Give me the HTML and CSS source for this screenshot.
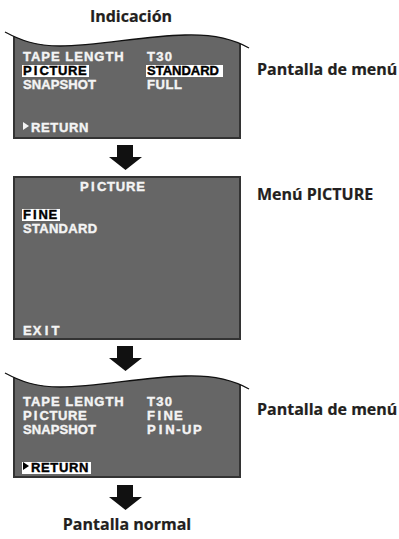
FILE: index.html
```html
<!DOCTYPE html>
<html lang="es">
<head>
    <meta charset="UTF-8">
    <meta name="viewport" content="width=device-width, initial-scale=1.0">
    <title>Indicación</title>
    <link rel="stylesheet" href="styles.css">
</head>
<body>

<div class="page">
    <h1 class="caption caption-top">Indicación</h1>

    <!-- menu screen -->
    <div class="step step-menu">
        <div class="screen wavy screen-menu">
            <svg class="wave" width="250" height="19" viewBox="0 0 250 19">
                <svg x="13" y="0" width="228" height="19" viewBox="13 0 228 19">
                    <path d="M5,2 C20,10 35,16 60,16 C100,16 140,6 185,5 C215,4 235,10 249,18 L249,19 L5,19 Z" fill="#333"/>
                </svg>
                <svg x="15" y="0" width="224" height="19" viewBox="15 0 224 19">
                    <path d="M5,2 C20,10 35,16 60,16 C100,16 140,6 185,5 C215,4 235,10 249,18 L249,19 L5,19 Z" fill="#666"/>
                </svg>
                <path d="M5,2 C20,10 35,16 60,16 C100,16 140,6 185,5 C215,4 235,10 249,18" fill="none" stroke="#111" stroke-width="1.3"/>
            </svg>
            <div class="rows">
                <span class="sp-tape">TAPE LENGTH</span><span class="sp-t30">T30</span>
                <span><span class="hl sp-pic">P<span class="wi">I</span>CTURE</span></span><span><span class="hl hl-std">STANDARD</span></span>
                <span class="sp-snap">SNAPSHOT</span><span class="sp-full">FULL</span>
            </div>
            <div class="return"><span class="tri"></span>RETURN</div>
        </div>
        <p class="label">Pantalla de menú</p>
    </div>

    <svg class="arrow" width="33" height="25" viewBox="0 0 33 25"><polygon points="8,0 24,0 24,12 33,12 16.5,25 0,12 8,12" fill="#111"/></svg>

    <!-- picture menu -->
    <div class="step step-picture">
        <div class="screen screen-picture">
            <div class="title">P<span class="wi">I</span>CTURE</div>
            <div class="opts">
                <div><span class="hl sp-fine">F<span class="wi">I</span>NE</span></div>
                <div class="sp-std">STANDARD</div>
            </div>
            <div class="exit">EX<span class="wi wi-exit">I</span>T</div>
        </div>
        <p class="label">Menú PICTURE</p>
    </div>

    <svg class="arrow" width="33" height="25" viewBox="0 0 33 25"><polygon points="8,0 24,0 24,12 33,12 16.5,25 0,12 8,12" fill="#111"/></svg>

    <!-- menu screen, updated -->
    <div class="step step-menu2">
        <div class="screen wavy screen-menu2">
            <svg class="wave" width="250" height="19" viewBox="0 0 250 19">
                <svg x="13" y="0" width="228" height="19" viewBox="13 0 228 19">
                    <path d="M5,2 C20,10 35,16 60,16 C100,16 140,6 185,5 C215,4 235,10 249,18 L249,19 L5,19 Z" fill="#333"/>
                </svg>
                <svg x="15" y="0" width="224" height="19" viewBox="15 0 224 19">
                    <path d="M5,2 C20,10 35,16 60,16 C100,16 140,6 185,5 C215,4 235,10 249,18 L249,19 L5,19 Z" fill="#666"/>
                </svg>
                <path d="M5,2 C20,10 35,16 60,16 C100,16 140,6 185,5 C215,4 235,10 249,18" fill="none" stroke="#111" stroke-width="1.3"/>
            </svg>
            <div class="rows">
                <span class="sp-tape">TAPE LENGTH</span><span class="sp-t30">T30</span>
                <span class="sp-pic">P<span class="wi">I</span>CTURE</span><span class="sp-fine2">F<span class="wi">I</span>NE</span>
                <span class="sp-snap">SNAPSHOT</span><span class="sp-pin">P<span class="wi">I</span>N-UP</span>
            </div>
            <div class="return"><span class="hl"><span class="tri"></span>RETURN</span></div>
        </div>
        <p class="label">Pantalla de menú</p>
    </div>

    <svg class="arrow arrow-last" width="33" height="25" viewBox="0 0 33 25"><polygon points="8,0 24,0 24,12 33,12 16.5,25 0,12 8,12" fill="#111"/></svg>

    <p class="caption caption-bottom">Pantalla normal</p>
</div>

</body>
</html>
```

FILE: styles.css
```css
* {
    box-sizing: border-box;
}
body {
    margin: 0;
    background-color: #fff;
    font-family: 'Open Sans', sans-serif;
    color: #231f20;
}
.page {
    display: flex;
    flex-direction: column;
    width: 399px;
}
.caption {
    margin: 0;
    font-size: 16px;
    font-weight: 700;
    line-height: 20px;
    text-align: center;
    -webkit-text-stroke: 0.2px currentColor;
}
.caption-top {
    margin: 5.5px 0 0 13px;
    width: 236px;
}
.caption-bottom {
    margin: 4px 0 0 13px;
    width: 228px;
}
.step {
    display: flex;
    align-items: flex-start;
}
.step-menu {
    margin-top: 21.5px;
}
.step-picture {
    margin-top: 6px;
}
.step-menu2 {
    margin-top: 17px;
}
.label {
    margin: 12px 0 0 16px;
    font-size: 16px;
    font-weight: 700;
    line-height: 20px;
    white-space: nowrap;
    -webkit-text-stroke: 0.2px currentColor;
}
.step-picture .label {
    margin-top: 8px;
}
.step-menu2 .label {
    margin-top: 11px;
}

/* on screen display */
.screen {
    position: relative;
    display: flex;
    flex-direction: column;
    width: 228px;
    margin-left: 13px;
    padding: 3px 8px 2px;
    background-color: #666;
    border: 2px solid #333;
    color: #f4f4f4;
    font-family: 'Liberation Sans', Arial, sans-serif;
    font-weight: 700;
    font-size: 13px;
    line-height: 14px;
    -webkit-text-stroke: 0.4px currentColor;
}
.screen.wavy {
    border-top: none;
}
.wave {
    position: absolute;
    top: -17px;
    left: -15px;
    overflow: visible;
}
.screen-menu {
    height: 92px;
}
.screen-picture {
    height: 164px;
    padding: 2px 8px 0;
}
.screen-menu2 {
    height: 90px;
    padding: 7px 8px 1px;
}
.rows {
    display: grid;
    grid-template-columns: 124px auto;
    justify-items: start;
}
.hl {
    display: inline-block;
    height: 12px;
    line-height: 12px;
    padding: 0 2px 0 1px;
    margin-left: -1px;
    background-color: #fff;
    color: #000;
}
.hl-std {
    padding-right: 4px;
}
.wi {
    margin: 0 1.5px;
}
.sp-tape { letter-spacing: 1px; }
.sp-t30 { letter-spacing: 1.3px; }
.sp-pic { letter-spacing: 0.6px; }
.sp-snap { letter-spacing: 0.1px; }
.sp-full { letter-spacing: 0.6px; }
.sp-fine { letter-spacing: 0.5px; }
.sp-fine2 { letter-spacing: 1px; }
.sp-pin { letter-spacing: 1.5px; }
.sp-std { letter-spacing: 0.3px; }

.return {
    margin-top: auto;
    letter-spacing: 0.64px;
}
.tri {
    display: inline-block;
    width: 0;
    height: 0;
    margin: 0 2px 2px 0;
    border-left: 6px solid currentColor;
    border-top: 4px solid transparent;
    border-bottom: 4px solid transparent;
    vertical-align: baseline;
}
.title {
    margin-left: 57px;
    letter-spacing: 0.8px;
}
.opts {
    margin-top: 14px;
}
.exit {
    margin-top: auto;
    letter-spacing: 1.2px;
}
.wi-exit {
    margin: 0 2px;
}
.arrow {
    display: block;
    margin: 6px 0 0 109px;
}
.arrow-last {
    margin-top: 7px;
}
```
